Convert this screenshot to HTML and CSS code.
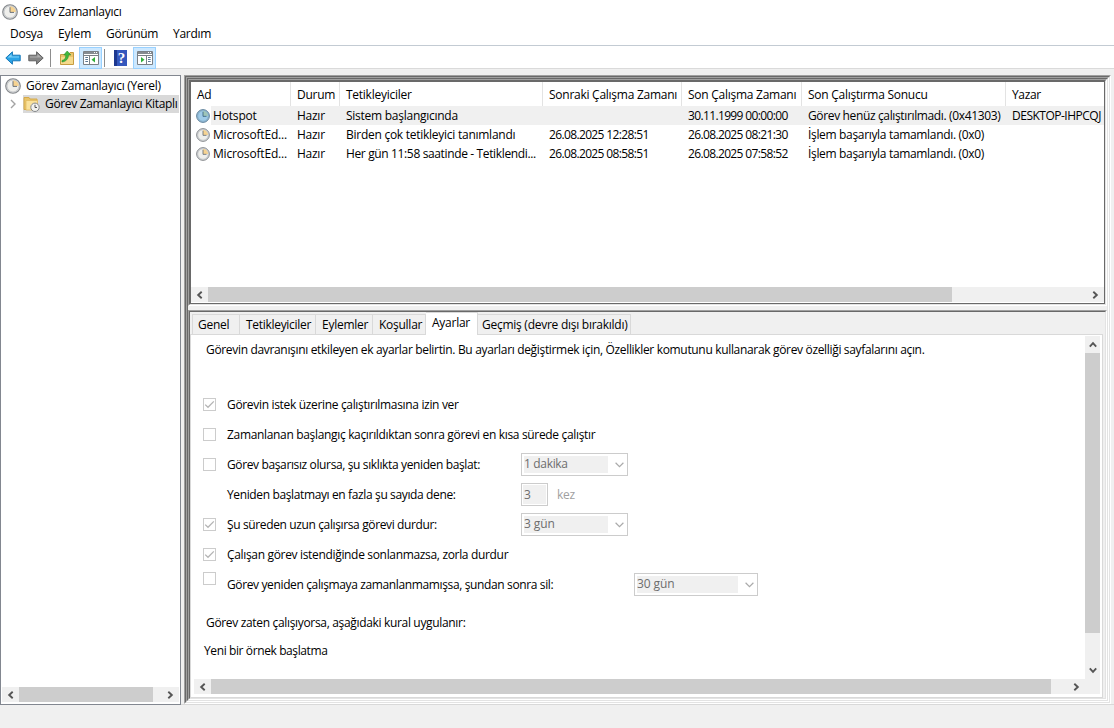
FILE: index.html
```html
<!DOCTYPE html>
<html lang="tr">
<head>
<meta charset="utf-8">
<title>Görev Zamanlayıcı</title>
<link rel="stylesheet" href="styles.css">
</head>
<body>
<svg class="defs" width="0" height="0">
  <defs>
    <symbol id="clock" viewBox="0 0 16 16">
      <circle cx="8" cy="8" r="7.3" fill="#d3d5d8" stroke="#85888b" stroke-width="1.1"/>
      <circle cx="8" cy="8" r="5.9" fill="#efefec" stroke="#b9bcbf" stroke-width=".6"/>
      <path d="M8 8V2.2A5.8 5.8 0 0 1 13.8 8Z" fill="#f6d391"/>
      <path d="M8 3.2V8.4H12" fill="none" stroke="#6d7379" stroke-width="1"/>
    </symbol>
    <symbol id="clock-sel" viewBox="0 0 16 16">
      <circle cx="8" cy="8" r="7.3" fill="#97bcd6" stroke="#5c7e97" stroke-width="1.1"/>
      <circle cx="8" cy="8" r="5.9" fill="#9fcbe8" stroke="#7ba6c3" stroke-width=".6"/>
      <path d="M8 8V2.2A5.8 5.8 0 0 1 13.8 8Z" fill="#9fc5b8"/>
      <path d="M8 3.2V8.4H12" fill="none" stroke="#3c6786" stroke-width="1"/>
    </symbol>
    <symbol id="left" viewBox="0 0 7 8"><path d="M5.7 .8L2.2 4L5.7 7.2" fill="none" stroke="#555" stroke-width="1.9"/></symbol>
    <symbol id="right" viewBox="0 0 7 8"><path d="M1.3 .8L4.8 4L1.3 7.2" fill="none" stroke="#555" stroke-width="1.9"/></symbol>
    <symbol id="up" viewBox="0 0 8 7"><path d="M.8 5.7L4 2.2L7.2 5.7" fill="none" stroke="#555" stroke-width="1.9"/></symbol>
    <symbol id="down" viewBox="0 0 8 7"><path d="M.8 1.3L4 4.8L7.2 1.3" fill="none" stroke="#555" stroke-width="1.9"/></symbol>
    <symbol id="drop" viewBox="0 0 9 6"><path d="M.6 .8L4.5 4.6L8.4 .8" fill="none" stroke="#aaa" stroke-width="1.2"/></symbol>
    <symbol id="check" viewBox="0 0 11 11"><path d="M1.2 5.6L4 8.3L9.8 2.4" fill="none" stroke="#b4b4b4" stroke-width="1.3"/></symbol>
  </defs>
</svg>
<header class="titlebar"><svg class="i16"><use href="#clock"/></svg><span>Görev Zamanlayıcı</span></header>
<nav class="menu"><span>Dosya</span><span class="wide-track">Eylem</span><span>Görünüm</span><span>Yardım</span></nav>
<div class="toolbar">
  <svg class="arrow" viewBox="0 0 16 14"><path d="M.8 7L7.4 .8V4.2H15.2V9.8H7.4V13.2Z" fill="#2ba4e6" stroke="#1878b8"/><path d="M2.6 6.6L6.6 3V5.4H14V6.6Z" fill="#7fd0f7"/></svg>
  <svg class="arrow fwd" viewBox="0 0 16 14"><path d="M15.2 7L8.6 .8V4.2H.8V9.8H8.6V13.2Z" fill="#858585" stroke="#606060"/><path d="M13.4 6.6L9.4 3V5.4H2V6.6Z" fill="#b0b0b0"/></svg>
  <i class="sep"></i>
  <svg class="folder-up" viewBox="0 0 16 16"><path d="M1.5 4.5H10L11 2.5H14.5V14.5H1.5Z" fill="#e9c46c" stroke="#c79c40"/><path d="M2 7H14V14H2Z" fill="#f5da8c"/><path d="M3 10.5C5.8 10 7 8 6.8 5H4.8L8.2 1L11.8 5H9.4C9.6 8.8 7 11.5 3 12Z" fill="#41b83c" stroke="#2b8b2c" stroke-width=".6"/></svg>
  <span class="toggle"><svg width="16" height="14" viewBox="0 0 16 14"><path d="M.5 .5H15.5V13.5H.5Z" fill="#fff" stroke="#7a8086"/><path d="M1 1H15V3H1Z" fill="#858b91"/><path d="M11 1.5h1M13 1.5h1" stroke="#fff"/><path d="M1 4.5H15M6.5 5V13" stroke="#7a8086"/><path d="M2.3 6.5h2.7M2.3 8.5h2.7M2.3 10.5h2.7" stroke="#5b7793"/><path d="M12 6V11.6L8.5 8.8Z" fill="#2fae3a"/></svg></span>
  <i class="sep second"></i>
  <svg class="help" viewBox="0 0 13 16"><path d="M0 0H13V16H0Z" fill="#3457bd"/><path d="M0 0H3V16H0Z" fill="#1d388f"/><text x="7.5" y="13" text-anchor="middle">?</text></svg>
  <span class="toggle"><svg width="16" height="14" viewBox="0 0 16 14"><path d="M.5 .5H15.5V13.5H.5Z" fill="#fff" stroke="#7a8086"/><path d="M1 1H15V3H1Z" fill="#858b91"/><path d="M11 1.5h1M13 1.5h1" stroke="#fff"/><path d="M1 4.5H15M9.5 5V13" stroke="#7a8086"/><path d="M11 6.5h2.7M11 8.5h2.7M11 10.5h2.7" stroke="#5b7793"/><path d="M4 6V11.6L7.5 8.8Z" fill="#2fae3a"/></svg></span>
</div>
<main class="work">
  <aside class="tree">
    <div class="node root"><svg class="i16"><use href="#clock"/></svg><span>Görev Zamanlayıcı (Yerel)</span></div>
    <div class="node child"><svg class="expand" viewBox="0 0 6 10"><path d="M1 1L5 5L1 9" fill="none" stroke="#a3a3a3" stroke-width="1.4"/></svg>
      <div class="selected"><svg class="folder" viewBox="0 0 17 16"><path d="M1 1.5H6L7 3H14V13.5H1Z" fill="#e9c469" stroke="#d5a94a"/><path d="M3 4.5H14.5V14H3Z" fill="#fae29c" stroke="#dfb85d" stroke-width=".7"/><circle cx="12" cy="11.3" r="4.2" fill="#f2f2ef" stroke="#85888b"/><path d="M12 8.8V11.5H14" fill="none" stroke="#555"/></svg><span>Görev Zamanlayıcı Kitaplı</span></div></div>
    <div class="hscroll"><svg><use href="#left"/></svg><i class="thumb"></i><svg class="end"><use href="#right"/></svg></div>
  </aside>
  <section class="edge e1"><div class="edge e2"><div class="edge e1"><div class="edge e2 stack">
    <div class="edge e1 listbox"><div class="edge e2"><div class="list">
      <div class="row head"><span>Ad</span><span>Durum</span><span>Tetikleyiciler</span><span>Sonraki Çalışma Zamanı</span><span>Son Çalışma Zamanı</span><span>Son Çalıştırma Sonucu</span><span class="tight">Yazar</span></div>
      <div class="row on"><svg class="i14"><use href="#clock-sel"/></svg><span class="name">Hotspot</span><span>Hazır</span><span>Sistem başlangıcında</span><span></span><span class="date">30.11.1999 00:00:00</span><span class="tight">Görev henüz çalıştırılmadı. (0x41303)</span><span class="author">DESKTOP-IHPCQJ</span></div>
      <div class="row"><svg class="i14"><use href="#clock"/></svg><span class="name">MicrosoftEd...</span><span>Hazır</span><span>Birden çok tetikleyici tanımlandı</span><span class="date">26.08.2025 12:28:51</span><span class="date">26.08.2025 08:21:30</span><span class="snug">İşlem başarıyla tamamlandı. (0x0)</span><span></span></div>
      <div class="row"><svg class="i14"><use href="#clock"/></svg><span class="name">MicrosoftEd...</span><span>Hazır</span><span class="tight">Her gün 11:58 saatinde - Tetiklendi...</span><span class="date">26.08.2025 08:58:51</span><span class="date">26.08.2025 07:58:52</span><span class="snug">İşlem başarıyla tamamlandı. (0x0)</span><span></span></div>
      <div class="hscroll"><svg><use href="#left"/></svg><i class="thumb"></i><svg class="end"><use href="#right"/></svg></div>
    </div></div></div>
    <div class="edge e1 details"><div class="edge e2 tabbox">
      <div class="tabs"><span class="tab t1">Genel</span><span class="tab t2">Tetikleyiciler</span><span class="tab t3">Eylemler</span><span class="tab t4">Koşullar</span><span class="tab t5 active">Ayarlar</span><span class="tab t6">Geçmiş (devre dışı bırakıldı)</span></div>
      <div class="pane">
        <div class="form">
          <p class="intro"><span>Görevin davranışını etkileyen ek ayarlar belirtin. Bu ayarları değiştirmek için, Özellikler komutunu kullanarak görev özelliği sayfalarını açın.</span></p>
          <div class="opt"><i class="box"><svg><use href="#check"/></svg></i><span>Görevin istek üzerine çalıştırılmasına izin ver</span></div>
          <div class="opt"><i class="box"></i><span>Zamanlanan başlangıç kaçırıldıktan sonra görevi en kısa sürede çalıştır</span></div>
          <div class="opt"><i class="box"></i><span class="lab">Görev başarısız olursa, şu sıklıkta yeniden başlat:</span><div class="combo"><em>1 dakika</em><svg><use href="#drop"/></svg></div></div>
          <div class="opt"><i class="nobox"></i><span class="lab">Yeniden başlatmayı en fazla şu sayıda dene:</span><div class="num"><em>3</em></div><span class="unit">kez</span></div>
          <div class="opt"><i class="box"><svg><use href="#check"/></svg></i><span class="lab">Şu süreden uzun çalışırsa görevi durdur:</span><div class="combo"><em class="wide-track">3 gün</em><svg><use href="#drop"/></svg></div></div>
          <div class="opt"><i class="box"><svg><use href="#check"/></svg></i><span>Çalışan görev istendiğinde sonlanmazsa, zorla durdur</span></div>
          <div class="opt raised"><i class="box"></i><span class="lab">Görev yeniden çalışmaya zamanlanmamışsa, şundan sonra sil:</span><div class="combo wide"><em class="wide-track">30 gün</em><svg><use href="#drop"/></svg></div></div>
          <p class="rule"><span>Görev zaten çalışıyorsa, aşağıdaki kural uygulanır:</span></p>
          <p class="rule val"><span>Yeni bir örnek başlatma</span></p>
        </div>
        <div class="vscroll"><svg><use href="#up"/></svg><i class="thumb"></i><svg class="end"><use href="#down"/></svg></div>
        <div class="hscroll"><svg><use href="#left"/></svg><i class="thumb"></i><svg class="end"><use href="#right"/></svg></div>
        <i class="corner"></i>
      </div>
    </div></div>
  </div></div></div></section>
</main>
<footer class="status"></footer>
</body>
</html>
```
FILE: styles.css
```css
* { box-sizing: border-box; }
body { margin: 0; width: 1114px; height: 728px; overflow: hidden; background: #f0f0f0; color: #000; font: 12px/16px "Open Sans", "Noto Sans", sans-serif; letter-spacing: -.26px; display: flex; flex-direction: column; }
span { white-space: nowrap; }
em, i { font-style: normal; }
svg { display: block; flex: none; }
p { margin: 0; }
.defs { position: absolute; }
.i16 { width: 16px; height: 16px; }
.i14 { width: 14px; height: 14px; }
.wide-track { letter-spacing: -.08px; }
.snug { letter-spacing: -.33px; }
.tight { letter-spacing: -.36px; }
.name { letter-spacing: -.17px; }
.date { letter-spacing: -.64px; }
.author { letter-spacing: -.5px; }

.titlebar { height: 23px; background: #fff; display: flex; align-items: center; gap: 5px; padding-left: 2px; }
.menu { height: 22px; background: #fff; display: flex; align-items: center; padding-left: 10px; }
.menu span { width: 48px; }
.menu span:nth-child(3) { width: 67px; }
.toolbar { height: 24px; background: #fff; border-top: 1px solid #c3cbd3; border-bottom: 1px solid #dadada; display: flex; align-items: center; padding: 1px 0 0 5px; }
.arrow { width: 16px; height: 14px; }
.fwd { margin-left: 7px; }
.sep { width: 1px; height: 18px; background: #8d8d8d; margin: 0 8px 0 6px; }
.folder-up { width: 16px; height: 16px; margin-right: 4px; }
.toggle { width: 23px; height: 22px; background: #cce8ff; border: 1px solid #99d1ff; display: grid; place-items: center; }
.second { margin: 0 9px 0 2px; }
.help { width: 13px; height: 16px; margin-right: 6px; }
.help text { font: bold 15px "Liberation Serif", serif; letter-spacing: 0; fill: #fff; }

.work { height: 636px; padding-top: 6px; border-bottom: 1px solid #d9d9d9; display: flex; gap: 3px; }
.tree { width: 181px; height: 630px; background: #fff; border: 1px solid #828790; display: flex; flex-direction: column; padding: 1px; overflow: hidden; }
.node { height: 18px; display: flex; align-items: center; flex: none; }
.root { gap: 5px; padding-left: 3px; }
.child { padding-left: 8px; gap: 7px; }
.expand { width: 6px; height: 10px; }
.selected { flex: 1; height: 18px; overflow: hidden; background: #d9d9d9; display: flex; align-items: center; gap: 5px; letter-spacing: -.33px; }
.folder { width: 17px; height: 16px; }

.hscroll { height: 15px; background: #f0f0f0; display: flex; align-items: center; margin-top: auto; }
.hscroll svg { width: 7px; height: 8px; margin: 0 5px; }
.hscroll .thumb { height: 15px; background: #cdcdcd; }
.hscroll .end { margin-left: auto; }
.tree .hscroll { margin-bottom: 1px; }
.tree .thumb { width: 134px; }

.edge { border: 1px solid; }
.e1 { border-color: #a0a0a0 #fff #fff #a0a0a0; }
.e2 { border-color: #696969 #e3e3e3 #e3e3e3 #696969; }
section.edge { width: 927px; height: 629px; }
.edge > .edge { height: 100%; }
.stack { display: flex; flex-direction: column; gap: 4px; }
.stack > .listbox { height: 227px; flex: none; }
.stack > .details { height: auto; flex: 1; min-height: 0; }
.list { height: 100%; border: 1px solid #696969; background: #fff; display: flex; flex-direction: column; overflow: hidden; padding-bottom: 1px; }
.row { height: 19px; flex: none; display: grid; grid-template-columns: 20px 79px 49px 203px 139px 120px 204px 99px; align-items: center; }
.row span { padding-left: 7px; overflow: hidden; }
.row svg { margin-left: 5px; }
.row svg + span { padding-left: 2px; }
.row.on { background: linear-gradient(90deg, #fff 20px, #f0f0f0 20px); }
.row.head { height: 24px; grid-template-columns: 100px 49px 203px 139px 120px 204px 98px; }
.head span { height: 24px; line-height: 25px; padding-left: 6px; border-right: 1px solid #e3e3e3; }
.head span:last-child { border: 0; }
.list .thumb { width: 744px; }

.tabbox { display: flex; flex-direction: column; padding-right: 2px; }
.tabs { height: 22px; padding-left: 2px; display: flex; align-items: flex-end; flex: none; }
.tab { height: 20px; line-height: 20px; border: 1px solid #d9d9d9; border-width: 1px 1px 0 0; padding-left: 6px; }
.t1 { width: 48px; border-left-width: 1px; padding-left: 5px; }
.t2 { width: 76px; letter-spacing: -.3px; }
.t3 { width: 57px; }
.t4 { width: 53px; }
.t5 { width: 52px; }
.t6 { width: 153px; padding-left: 4px; }
.tab.active { height: 23px; margin-bottom: -1px; background: #fff; position: relative; }
.pane { flex: 1; background: #fff; border: 1px solid #d9d9d9; display: grid; grid-template-columns: 1fr 15px; grid-template-rows: 1fr 15px; padding: 1px 2px 3px 3px; }
.form { overflow: hidden; padding: 6px 0 0 9px; letter-spacing: -.33px; }
.intro { height: 48px; padding-left: 3px; }
.opt { height: 30px; display: flex; align-items: center; }
.box, .nobox { width: 13px; height: 13px; margin: -1px 11px 0 0; }
.box { border: 1px solid #ccc; }
.box svg { width: 11px; height: 11px; }
.raised .box { margin-top: -13px; }
.lab { width: 294px; letter-spacing: -.37px; }
.raised .lab { width: 407px; }
.combo { width: 107px; height: 23px; margin-top: -1px; border: 1px solid #ccc; padding: 2px; display: flex; align-items: center; color: #6d6d6d; }
.combo em { width: 84px; height: 17px; background: #f0f0f0; line-height: 16px; }
.combo svg { width: 9px; height: 6px; margin: 1px 0 0 7px; }
.combo.wide { width: 124px; }
.combo.wide em { width: 101px; }
.num { width: 27px; height: 23px; margin-top: -1px; border: 1px solid #ccc; padding: 1px; color: #6d6d6d; }
.num em { display: block; height: 19px; background: #f0f0f0; padding-left: 1px; line-height: 19px; }
.unit { color: #a0a0a0; margin-left: 9px; }
.rule { padding: 15px 0 0 3px; }
.rule.val { padding: 12px 0 0 1px; letter-spacing: -.39px; }
.vscroll { background: #f0f0f0; display: flex; flex-direction: column; align-items: center; }
.vscroll svg { width: 8px; height: 7px; margin: 5px 0; }
.vscroll .thumb { width: 15px; height: 280px; background: #cdcdcd; }
.vscroll .end { margin-top: auto; }
.pane .hscroll .thumb { width: 840px; }
.corner { background: #f0f0f0; }
.status { height: 23px; }
```
